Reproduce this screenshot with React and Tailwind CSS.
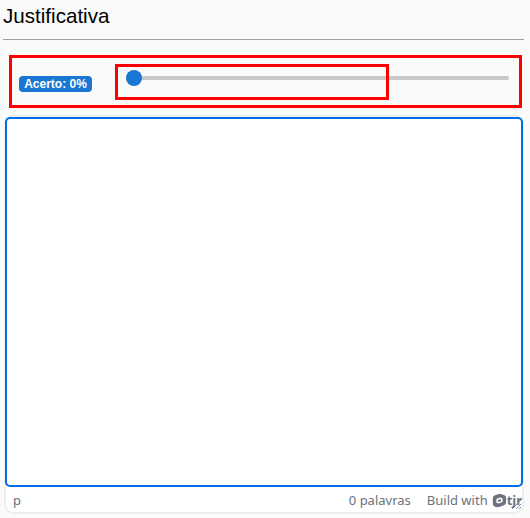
import React from "react";

function TinyLogo() {
  return (
    <svg width="15" height="15" viewBox="0 0 15 15" className="shrink-0">
      <path
        d="M7.5 0.8 L12 2 Q14 2.5 14 4.5 V9.5 Q14 11.5 12 12.2 L7 14 Q3 14.6 1.8 13 Q0.8 12 0.8 10 V4.8 Q0.8 3 3 2.2 Z"
        fill="#6b7280"
      />
      <path d="M7.8 4.4 L10.6 5.2 V9 L6.8 10.6 L4.4 9.8 V6 Z" fill="#ffffff" />
      <path d="M7.6 6.2 L8.9 6.6 V8.2 L7 8.9 L6 8.5 V7 Z" fill="#6b7280" />
    </svg>
  );
}

function ResizeHandle() {
  return (
    <svg width="12" height="12" viewBox="0 0 12 12" className="absolute right-0 bottom-[2px]">
      <path d="M11 2 L2 11 M11 6 L6 11 M11 9 L9 11" stroke="#8a8f96" strokeWidth="1" fill="none" />
    </svg>
  );
}

function App() {
  return (
    <div className="relative w-[530px] h-[518px] overflow-hidden bg-[#fafafa] font-['Liberation_Sans',sans-serif]">
      <h2 className="pl-[3px] pt-[4px] h-[39px] text-[20.6px] leading-[23px] text-black">Justificativa</h2>
      <div className="ml-[3px] w-[521px] h-px bg-[#a0a0a0]" />

      <div className="relative ml-[9px] mt-[15px] w-[513px] h-[53px] border-[3px] border-[#ff0000] flex items-center">
        <span className="ml-[7px] mt-[4px] w-[73px] h-[16px] rounded-[4px] bg-[#1976d2] text-white text-[12px] leading-[16px] text-center font-bold">
          Acerto: 0%
        </span>
        <div className="relative ml-[42px] -mt-[8px] w-[375px] h-[4px] rounded-full bg-[#c8c8c8]">
          <div className="absolute -left-[8px] -top-[6px] w-4 h-4 rounded-full bg-[#1976d2]" />
        </div>
        <div className="absolute left-[103px] top-[6px] w-[274px] h-[36px] border-[3px] border-[#ff0000]" />
      </div>

      <div className="ml-[4px] mt-[7px] w-[520px] h-[399px] bg-white rounded-[10px] border-2 border-[#eeeeee] flex flex-col">
        <div className="h-[370px] -mx-px border-2 border-[#006ce7] rounded-[5px] bg-white" />
        <div className="relative flex-1 flex items-center pt-[2px] pl-[7px] text-[13px] text-[#6b7280] font-['Noto_Sans',sans-serif]">
          <span>p</span>
          <span className="ml-auto">0 palavras</span>
          <span className="ml-[16px]">Build with</span>
          <span className="ml-[4px] flex items-center">
            <TinyLogo />
            <span className="font-bold text-[13px] leading-none">tjr</span>
          </span>
          <ResizeHandle />
        </div>
      </div>
    </div>
  );
}

export default App;
